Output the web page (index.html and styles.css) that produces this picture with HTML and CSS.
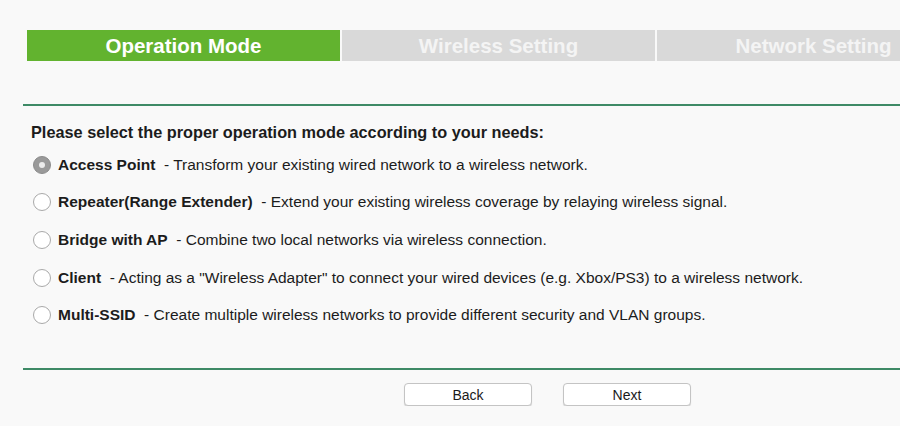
FILE: index.html
```html
<!DOCTYPE html>
<html>
<head>
<meta charset="utf-8">
<link rel="stylesheet" href="styles.css">
</head>
<body>
<div class="tabs">
  <div class="tab active">Operation Mode</div>
  <div class="tab">Wireless Setting</div>
  <div class="tab">Network Setting</div>
</div>
<div class="rule top"></div>
<div class="content">
  <p class="heading">Please select the proper operation mode according to your needs:</p>
  <div class="option"><span class="radio checked"></span><b>Access Point</b>&nbsp; - Transform your existing wired network to a wireless network.</div>
  <div class="option"><span class="radio"></span><b>Repeater(Range Extender)</b>&nbsp; - Extend your existing wireless coverage by relaying wireless signal.</div>
  <div class="option"><span class="radio"></span><b>Bridge with AP</b>&nbsp; - Combine two local networks via wireless connection.</div>
  <div class="option"><span class="radio"></span><b>Client</b>&nbsp; - Acting as a "Wireless Adapter" to connect your wired devices (e.g. Xbox/PS3) to a wireless network.</div>
  <div class="option"><span class="radio"></span><b>Multi-SSID</b>&nbsp; - Create multiple wireless networks to provide different security and VLAN groups.</div>
</div>
<div class="rule bottom"></div>
<div class="buttons">
  <button class="btn">Back</button>
  <button class="btn">Next</button>
</div>
</body>
</html>
```
FILE: styles.css
```css
html, body {
  margin: 0;
  padding: 0;
  background: #f9f9f9;
  font-family: "Liberation Sans", Arial, sans-serif;
  color: #1c1c1c;
  overflow: hidden;
}
.tabs {
  display: flex;
  gap: 2px;
  margin-top: 30px;
  padding-left: 27px;
  overflow: hidden;
}
.tab {
  flex: 0 0 313px;
  height: 31px;
  line-height: 31px;
  text-align: center;
  background: #d9d9d9;
  color: #f4f4f4;
  font-weight: bold;
  font-size: 20.5px;
  white-space: nowrap;
}
.tab.active {
  background: #62b32f;
  color: #ffffff;
}
.rule {
  height: 2px;
  background: #3e8a66;
  margin-left: 23px;
}
.rule.top {
  margin-top: 43px;
}
.content {
  padding-left: 31px;
  padding-top: 17px;
  height: 245px;
}
.heading {
  margin: 0 0 4px 0;
  font-weight: bold;
  font-size: 16.3px;
}
.option {
  display: flex;
  align-items: center;
  height: 37.6px;
  font-size: 15.5px;
  white-space: nowrap;
}
.radio {
  box-sizing: border-box;
  width: 18px;
  height: 18px;
  border-radius: 50%;
  border: 1px solid #a9a9a9;
  background: #ffffff;
  margin-left: 2px;
  margin-right: 7px;
  flex: 0 0 auto;
  position: relative;
}
.radio.checked {
  background: #9a9a9a;
  border-color: #8c8c8c;
}
.radio.checked::after {
  content: "";
  position: absolute;
  left: 5px;
  top: 5px;
  width: 6px;
  height: 6px;
  border-radius: 50%;
  background: #ececec;
}
.buttons {
  display: flex;
  gap: 31px;
  padding-left: 404px;
  margin-top: 13px;
}
.btn {
  width: 128px;
  height: 23px;
  background: #ffffff;
  border: 1px solid #c4c4c4;
  border-radius: 4px;
  box-shadow: 0 1px 1px rgba(0,0,0,0.15);
  font-family: "Liberation Sans", Arial, sans-serif;
  font-size: 14px;
  color: #1a1a1a;
  padding: 0;
}
```
